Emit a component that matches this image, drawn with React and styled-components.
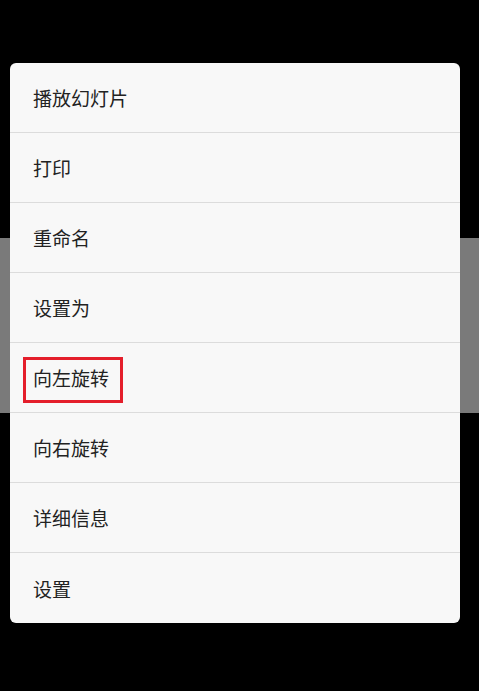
import React from 'react';
import styled, { createGlobalStyle } from 'styled-components';

const GlobalStyle = createGlobalStyle`
  html, body {
    margin: 0;
    padding: 0;
    background: #000;
  }
  body {
    font-family: "Noto Sans CJK SC", "Noto Sans", sans-serif;
  }
`;

const Screen = styled.div`
  position: relative;
  width: 479px;
  height: 691px;
  overflow: hidden;
  display: flex;
  flex-direction: column;
  background: #000;
`;

const Band = styled.div`
  height: ${props => props.h}px;
  flex-shrink: 0;
  background: ${props => props.color};
`;

const Menu = styled.ul`
  position: absolute;
  left: 10px;
  top: 63px;
  width: 450px;
  margin: 0;
  padding: 0;
  list-style: none;
  background: #f8f8f8;
  border-radius: 6px;
  overflow: hidden;
`;

const Item = styled.li`
  position: relative;
  height: 69px;
  display: flex;
  align-items: center;
  padding-left: 23px;
  font-size: 19px;
  color: #222;
  border-bottom: 1px solid #dcdcdc;

  &:last-child {
    height: 70px;
    border-bottom: none;
  }
`;

const Highlight = styled.span`
  position: absolute;
  left: 13px;
  top: 14px;
  width: 100px;
  height: 46px;
  box-sizing: border-box;
  border: 3px solid #e41e2b;
`;

const items = [
  '播放幻灯片',
  '打印',
  '重命名',
  '设置为',
  '向左旋转',
  '向右旋转',
  '详细信息',
  '设置',
];

export default function App() {
  return (
    <>
      <GlobalStyle />
      <Screen>
        <Band h={238} color="#000" />
        <Band h={175} color="#7a7a7a" />
        <Menu>
          {items.map(label => (
            <Item key={label}>
              {label}
              {label === '向左旋转' && <Highlight />}
            </Item>
          ))}
        </Menu>
      </Screen>
    </>
  );
}
